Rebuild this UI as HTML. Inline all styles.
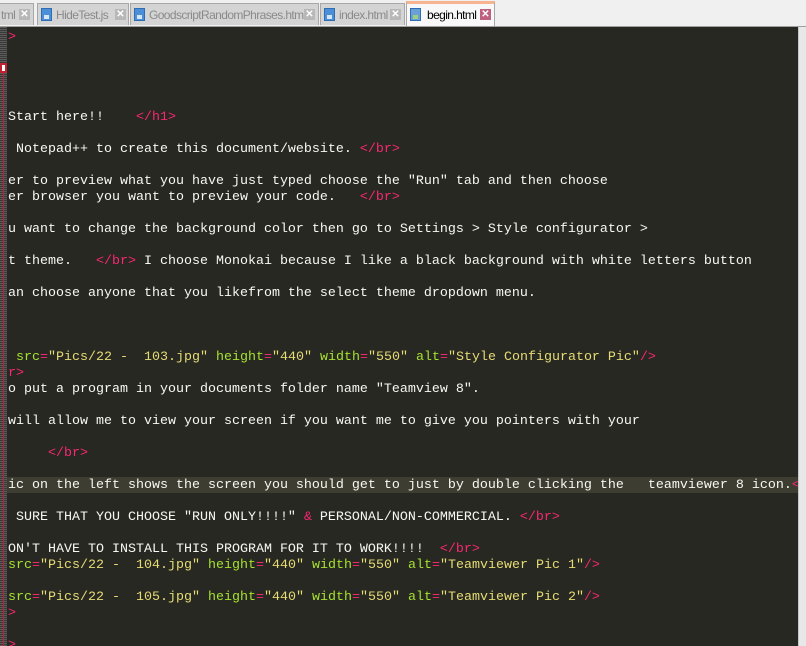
<!DOCTYPE html>
<html><head><meta charset="utf-8"><style>
html,body{margin:0;padding:0;width:806px;height:646px;overflow:hidden;background:#f0f0f0;}
#tabs{position:absolute;left:0;top:0;width:806px;height:26px;background:#f0f0f0;border-bottom:1px solid #a0a0a0;}
.tab{position:absolute;top:3px;height:22px;background:#d4d4d4;border:1px solid #a8a8a8;border-bottom:none;font-family:"Liberation Sans",sans-serif;font-size:12px;color:#8a8a8a;line-height:22px;box-sizing:border-box;letter-spacing:-0.6px;overflow:hidden;}
.tab .ic{position:absolute;left:3px;top:4px;width:11px;height:13px;background:#4a8fd8;border:1px solid #2f6db0;box-sizing:border-box;}
.tab .ic:after{content:"";position:absolute;left:2px;bottom:1px;width:5px;height:4px;background:#d6e6f6;}
.tab .x{position:absolute;top:5px;width:11px;height:11px;background:#b8b8b8;color:#fff;font-size:10px;line-height:11px;text-align:center;font-weight:bold;letter-spacing:0;}
.tab.act{background:#f8f8f8;color:#000;top:1px;height:25px;border-top:3px solid #f8b490;}
.tab.act .ic{background:#6aa0d8;}
.tab.act .ic:after{background:#9cd07c;}
.tab.act .x{background:#c06080;}
#ed{position:absolute;left:0;top:27px;width:798px;height:619px;background:#272822;overflow:hidden;}
#margin{position:absolute;left:0;top:0;width:7px;height:619px;background:repeating-linear-gradient(0deg,#5a5a5a 0 1px,#3a3a3a 1px 2px);}
#fold{position:absolute;left:3px;top:44px;width:1px;height:575px;background:#c02030;}
#box{position:absolute;left:0;top:36px;width:7px;height:10px;background:#fff;border:2px solid #c02030;box-sizing:border-box;}
#sb{position:absolute;left:798px;top:27px;width:8px;height:619px;background:#e8e8e8;border-left:1px solid #c8c8c8;}
.l{position:absolute;left:8px;height:16px;line-height:16px;margin-top:2px;font-family:"Liberation Mono",monospace;font-size:13.33px;color:#f8f8f2;white-space:pre;}
.t{color:#f92672}.a{color:#a6e22e}.s{color:#e6db74}
#hl{position:absolute;left:7px;top:450px;width:791px;height:16px;background:#3e3d32;}
</style></head><body>
<div id="tabs">
<div class="tab" style="left:-4px;width:38px;"><span style="position:absolute;left:4px;">tml</span><span class="x" style="left:22px;">✕</span></div>
<div class="tab" style="left:37px;width:92px;"><span class="ic"></span><span style="position:absolute;left:18px;">HideTest.js</span><span class="x" style="left:77px;">✕</span></div>
<div class="tab" style="left:130px;width:189px;"><span class="ic"></span><span style="position:absolute;left:18px;">GoodscriptRandomPhrases.html</span><span class="x" style="left:173px;">✕</span></div>
<div class="tab" style="left:320px;width:85px;"><span class="ic"></span><span style="position:absolute;left:18px;">index.html</span><span class="x" style="left:69px;">✕</span></div>
<div class="tab act" style="left:406px;width:89px;"><span class="ic"></span><span style="position:absolute;left:20px;">begin.html</span><span class="x" style="left:73px;">✕</span></div>
</div>
<div id="ed">
<div id="hl"></div>
<div id="margin"></div><div id="fold"></div><div id="box"></div>
<div class="l t" style="top:1px">&gt;</div>
<div class="l" style="top:81px">Start here!!    <span class="t">&lt;/h1&gt;</span></div>
<div class="l" style="top:113px"> Notepad++ to create this document/website. <span class="t">&lt;/br&gt;</span></div>
<div class="l" style="top:145px">er to preview what you have just typed choose the "Run" tab and then choose</div>
<div class="l" style="top:161px">er browser you want to preview your code.   <span class="t">&lt;/br&gt;</span></div>
<div class="l" style="top:193px">u want to change the background color then go to Settings &gt; Style configurator &gt;</div>
<div class="l" style="top:225px">t theme.   <span class="t">&lt;/br&gt;</span> I choose Monokai because I like a black background with white letters button</div>
<div class="l" style="top:257px">an choose anyone that you likefrom the select theme dropdown menu.</div>
<div class="l" style="top:321px"> <span class="a">src</span><span class="t">=</span><span class="s">"Pics/22 -  103.jpg"</span> <span class="a">height</span><span class="t">=</span><span class="s">"440"</span> <span class="a">width</span><span class="t">=</span><span class="s">"550"</span> <span class="a">alt</span><span class="t">=</span><span class="s">"Style Configurator Pic"</span><span class="t">/&gt;</span></div>
<div class="l t" style="top:337px">r&gt;</div>
<div class="l" style="top:353px">o put a program in your documents folder name "Teamview 8".</div>
<div class="l" style="top:385px">will allow me to view your screen if you want me to give you pointers with your</div>
<div class="l" style="top:417px">     <span class="t">&lt;/br&gt;</span></div>
<div class="l" style="top:449px">ic on the left shows the screen you should get to just by double clicking the   teamviewer 8 icon.<span class="t">&lt;</span></div>
<div class="l" style="top:481px"> SURE THAT YOU CHOOSE "RUN ONLY!!!!" <span class="t">&amp;</span> PERSONAL/NON-COMMERCIAL. <span class="t">&lt;/br&gt;</span></div>
<div class="l" style="top:513px">ON'T HAVE TO INSTALL THIS PROGRAM FOR IT TO WORK!!!!  <span class="t">&lt;/br&gt;</span></div>
<div class="l" style="top:529px"><span class="a">src</span><span class="t">=</span><span class="s">"Pics/22 -  104.jpg"</span> <span class="a">height</span><span class="t">=</span><span class="s">"440"</span> <span class="a">width</span><span class="t">=</span><span class="s">"550"</span> <span class="a">alt</span><span class="t">=</span><span class="s">"Teamviewer Pic 1"</span><span class="t">/&gt;</span></div>
<div class="l" style="top:561px"><span class="a">src</span><span class="t">=</span><span class="s">"Pics/22 -  105.jpg"</span> <span class="a">height</span><span class="t">=</span><span class="s">"440"</span> <span class="a">width</span><span class="t">=</span><span class="s">"550"</span> <span class="a">alt</span><span class="t">=</span><span class="s">"Teamviewer Pic 2"</span><span class="t">/&gt;</span></div>
<div class="l t" style="top:577px">&gt;</div>
<div class="l t" style="top:609px">&gt;</div>
</div>
<div id="sb"></div>
</body></html>
